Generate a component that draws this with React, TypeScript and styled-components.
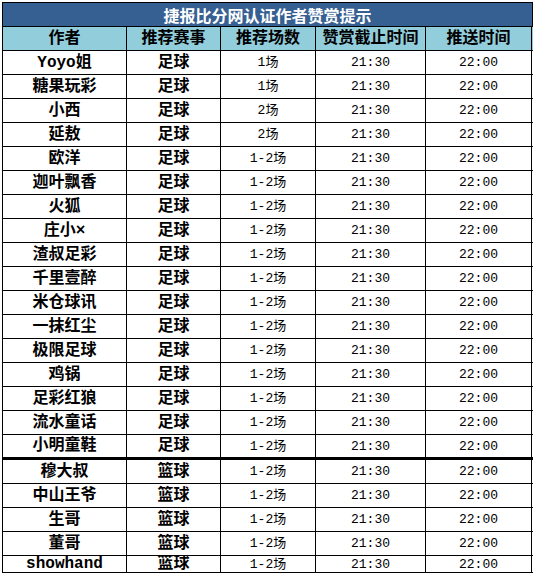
import React from "react";
import styled, { createGlobalStyle } from "styled-components";

const GlobalStyle = createGlobalStyle`
  html, body {
    margin: 0;
    padding: 0;
    background: #ffffff;
  }
`;

type Tip = {
  author: string;
  sport: string;
  count: string;
};

const football: Tip[] = [
  { author: "Yoyo姐", sport: "足球", count: "1场" },
  { author: "糖果玩彩", sport: "足球", count: "1场" },
  { author: "小西", sport: "足球", count: "2场" },
  { author: "延敖", sport: "足球", count: "2场" },
  { author: "欧洋", sport: "足球", count: "1-2场" },
  { author: "迦叶飘香", sport: "足球", count: "1-2场" },
  { author: "火狐", sport: "足球", count: "1-2场" },
  { author: "庄小×", sport: "足球", count: "1-2场" },
  { author: "渣叔足彩", sport: "足球", count: "1-2场" },
  { author: "千里壹醉", sport: "足球", count: "1-2场" },
  { author: "米仓球讯", sport: "足球", count: "1-2场" },
  { author: "一抹红尘", sport: "足球", count: "1-2场" },
  { author: "极限足球", sport: "足球", count: "1-2场" },
  { author: "鸡锅", sport: "足球", count: "1-2场" },
  { author: "足彩红狼", sport: "足球", count: "1-2场" },
  { author: "流水童话", sport: "足球", count: "1-2场" },
  { author: "小明童鞋", sport: "足球", count: "1-2场" },
];

const basketball: Tip[] = [
  { author: "穆大叔", sport: "篮球", count: "1-2场" },
  { author: "中山王爷", sport: "篮球", count: "1-2场" },
  { author: "生哥", sport: "篮球", count: "1-2场" },
  { author: "董哥", sport: "篮球", count: "1-2场" },
  { author: "showhand", sport: "篮球", count: "1-2场" },
];

const headers = ["作者", "推荐赛事", "推荐场数", "赞赏截止时间", "推送时间"];

const App = () => {
  return (
    <Page>
      <GlobalStyle />
      <Table>
        <Title>捷报比分网认证作者赞赏提示</Title>
        <Row $head>
          {headers.map((h) => (
            <Cell key={h} $bold>
              {h}
            </Cell>
          ))}
        </Row>
        {football.map((t, i) => (
          <Row key={t.author} $thick={i === football.length - 1}>
            <Cell $bold>{t.author}</Cell>
            <Cell $bold>{t.sport}</Cell>
            <Cell $small>{t.count}</Cell>
            <Cell $small>21:30</Cell>
            <Cell $small>22:00</Cell>
          </Row>
        ))}
        {basketball.map((t, i) => (
          <Row key={t.author} $clip={i === basketball.length - 1}>
            <Cell $bold>{t.author}</Cell>
            <Cell $bold>{t.sport}</Cell>
            <Cell $small>{t.count}</Cell>
            <Cell $small>21:30</Cell>
            <Cell $small>22:00</Cell>
          </Row>
        ))}
      </Table>
    </Page>
  );
};

export default App;

const Page = styled.div`
  padding: 2px 0 0 2px;
  width: 535px;
  height: 575px;
  box-sizing: border-box;
  overflow: hidden;
`;

const Table = styled.div`
  width: 530px;
  display: flex;
  flex-direction: column;
  border-top: 1px solid #000;
  border-left: 1px solid #000;
  font-family: "Liberation Mono", "Noto Sans CJK SC", monospace;
  color: #000;
`;

const Title = styled.div`
  height: 24px;
  box-sizing: border-box;
  display: flex;
  align-items: center;
  justify-content: center;
  background: #376092;
  color: #ffffff;
  font-family: "Noto Sans CJK SC", sans-serif;
  font-weight: 700;
  font-size: 16px;
  border-right: 1px solid #000;
  border-bottom: 1px solid #000;
`;

const Row = styled.div<{ $head?: boolean; $thick?: boolean; $clip?: boolean }>`
  display: grid;
  grid-template-columns: 124px 94px 95px 110px 106px;
  box-sizing: border-box;
  height: ${(p) => (p.$thick ? "25px" : p.$clip ? "17px" : "24px")};
  border-bottom: ${(p) => (p.$thick ? "3px" : "1px")} solid #000;
  background: ${(p) => (p.$head ? "#92cddc" : "#ffffff")};
  overflow: hidden;
`;

const Cell = styled.div<{ $bold?: boolean; $small?: boolean }>`
  display: flex;
  align-items: center;
  justify-content: center;
  border-right: 1px solid #000;
  box-sizing: border-box;
  white-space: nowrap;
  font-size: ${(p) => (p.$small ? "13px" : "16px")};
  font-weight: ${(p) => (p.$bold ? 700 : 400)};
  line-height: 1;
`;
